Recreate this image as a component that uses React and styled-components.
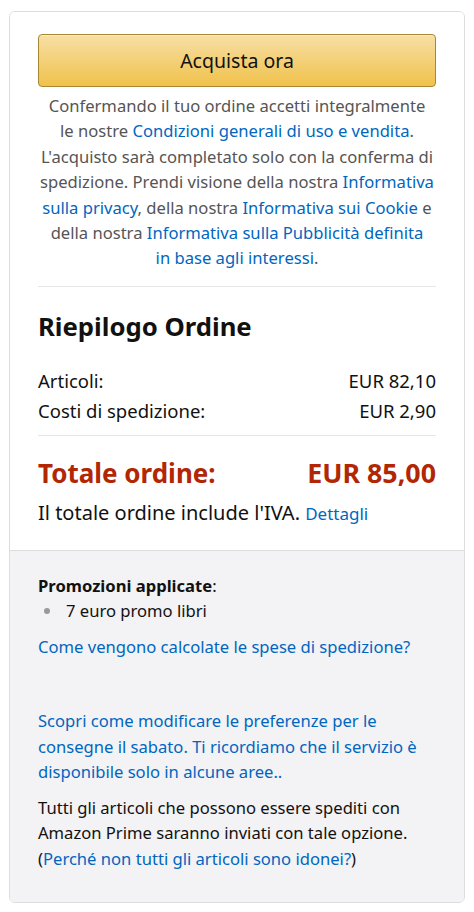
import React from "react";
import styled, { createGlobalStyle } from "styled-components";

const GlobalStyle = createGlobalStyle`
  html, body {
    margin: 0;
    padding: 0;
    background: #ffffff;
  }
  body {
    font-family: "Noto Sans", "Open Sans", Arial, sans-serif;
    color: #111111;
  }
`;

const Page = styled.div`
  padding: 11px 9px 10px 9px;
`;

const Card = styled.div`
  border: 1px solid #dddddd;
  border-radius: 6px;
  overflow: hidden;
`;

const Top = styled.div`
  background: #ffffff;
  padding: 22px 28px 23px 28px;
  border-bottom: 1px solid #dddddd;
`;

const BuyButton = styled.button`
  display: block;
  width: 100%;
  height: 53px;
  border: 1px solid #a88734;
  border-radius: 4px;
  background: linear-gradient(to bottom, #f7dfa5, #f0c14b);
  box-shadow: inset 0 1px 0 rgba(255, 255, 255, 0.4);
  font-family: inherit;
  font-size: 19.5px;
  color: #111111;
  padding: 0;
  cursor: pointer;
`;

const Legal = styled.p`
  margin: 6px 0 0 0;
  padding-bottom: 15px;
  text-align: center;
  font-size: 16.6px;
  line-height: 25.4px;
  color: #555555;
  border-bottom: 1px solid #e7e7e7;
`;

const Link = styled.a`
  color: #0066c0;
  text-decoration: none;
`;

const Title = styled.h2`
  margin: 25px 0 24px 0;
  font-size: 25.7px;
  font-weight: 700;
  line-height: 30px;
`;

const Row = styled.div`
  display: flex;
  justify-content: space-between;
  font-size: 18.5px;
  line-height: 30px;
`;

const Rows = styled.div`
  padding-bottom: 9px;
  border-bottom: 1px solid #e7e7e7;
`;

const Total = styled(Row)`
  margin-top: 21px;
  font-size: 26px;
  font-weight: 700;
  color: #b12704;
  line-height: 32px;
  span:last-child {
    font-size: 26.8px;
  }
`;

const Vat = styled.div`
  margin-top: 11px;
  font-size: 20px;
  line-height: 26px;
  span {
    font-size: 17px;
  }
`;

const Bottom = styled.div`
  background: #f3f2f5;
  padding: 22px 28px 31px 28px;
  font-size: 16.6px;
  line-height: 25.5px;
`;

const PromoTitle = styled.div`
  b {
    font-weight: 700;
  }
`;

const PromoList = styled.ul`
  margin: 0;
  padding: 0 0 0 6px;
  list-style: none;
  li {
    display: flex;
    align-items: center;
    gap: 16px;
  }
  li::before {
    content: "";
    width: 6px;
    height: 6px;
    border-radius: 50%;
    background: #999999;
  }
`;

const Para = styled.p`
  margin: ${(p) => p.$top || "10px"} 0 0 0;
`;

export default function App() {
  return (
    <>
      <GlobalStyle />
      <Page>
        <Card>
          <Top>
            <BuyButton>Acquista ora</BuyButton>
            <Legal>
              Confermando il tuo ordine accetti integralmente
              <br />
              le nostre <Link>Condizioni generali di uso e vendita</Link>.
              L'acquisto sarà completato solo con la conferma di spedizione.
              Prendi visione della nostra <Link>Informativa sulla privacy</Link>,
              della nostra <Link>Informativa sui Cookie</Link> e della nostra{" "}
              <Link>
                Informativa sulla Pubblicità definita
                <br />
                in base agli interessi
              </Link>
              .
            </Legal>
            <Title>Riepilogo Ordine</Title>
            <Rows>
              <Row>
                <span>Articoli:</span>
                <span>EUR 82,10</span>
              </Row>
              <Row>
                <span>Costi di spedizione:</span>
                <span>EUR 2,90</span>
              </Row>
            </Rows>
            <Total>
              <span>Totale ordine:</span>
              <span>EUR 85,00</span>
            </Total>
            <Vat>
              Il totale ordine include l'IVA. <Link as="span">Dettagli</Link>
            </Vat>
          </Top>
          <Bottom>
            <PromoTitle>
              <b>Promozioni applicate</b>:
            </PromoTitle>
            <PromoList>
              <li>7 euro promo libri</li>
            </PromoList>
            <Para $top="10px">
              <Link>Come vengono calcolate le spese di spedizione?</Link>
            </Para>
            <Para $top="49px">
              <Link>
                Scopri come modificare le preferenze per le consegne il sabato. Ti
                ricordiamo che il servizio è disponibile solo in alcune aree..
              </Link>
            </Para>
            <Para>
              Tutti gli articoli che possono essere spediti con Amazon Prime
              saranno inviati con tale opzione. (
              <Link>Perché non tutti gli articoli sono idonei?</Link>)
            </Para>
          </Bottom>
        </Card>
      </Page>
    </>
  );
}
